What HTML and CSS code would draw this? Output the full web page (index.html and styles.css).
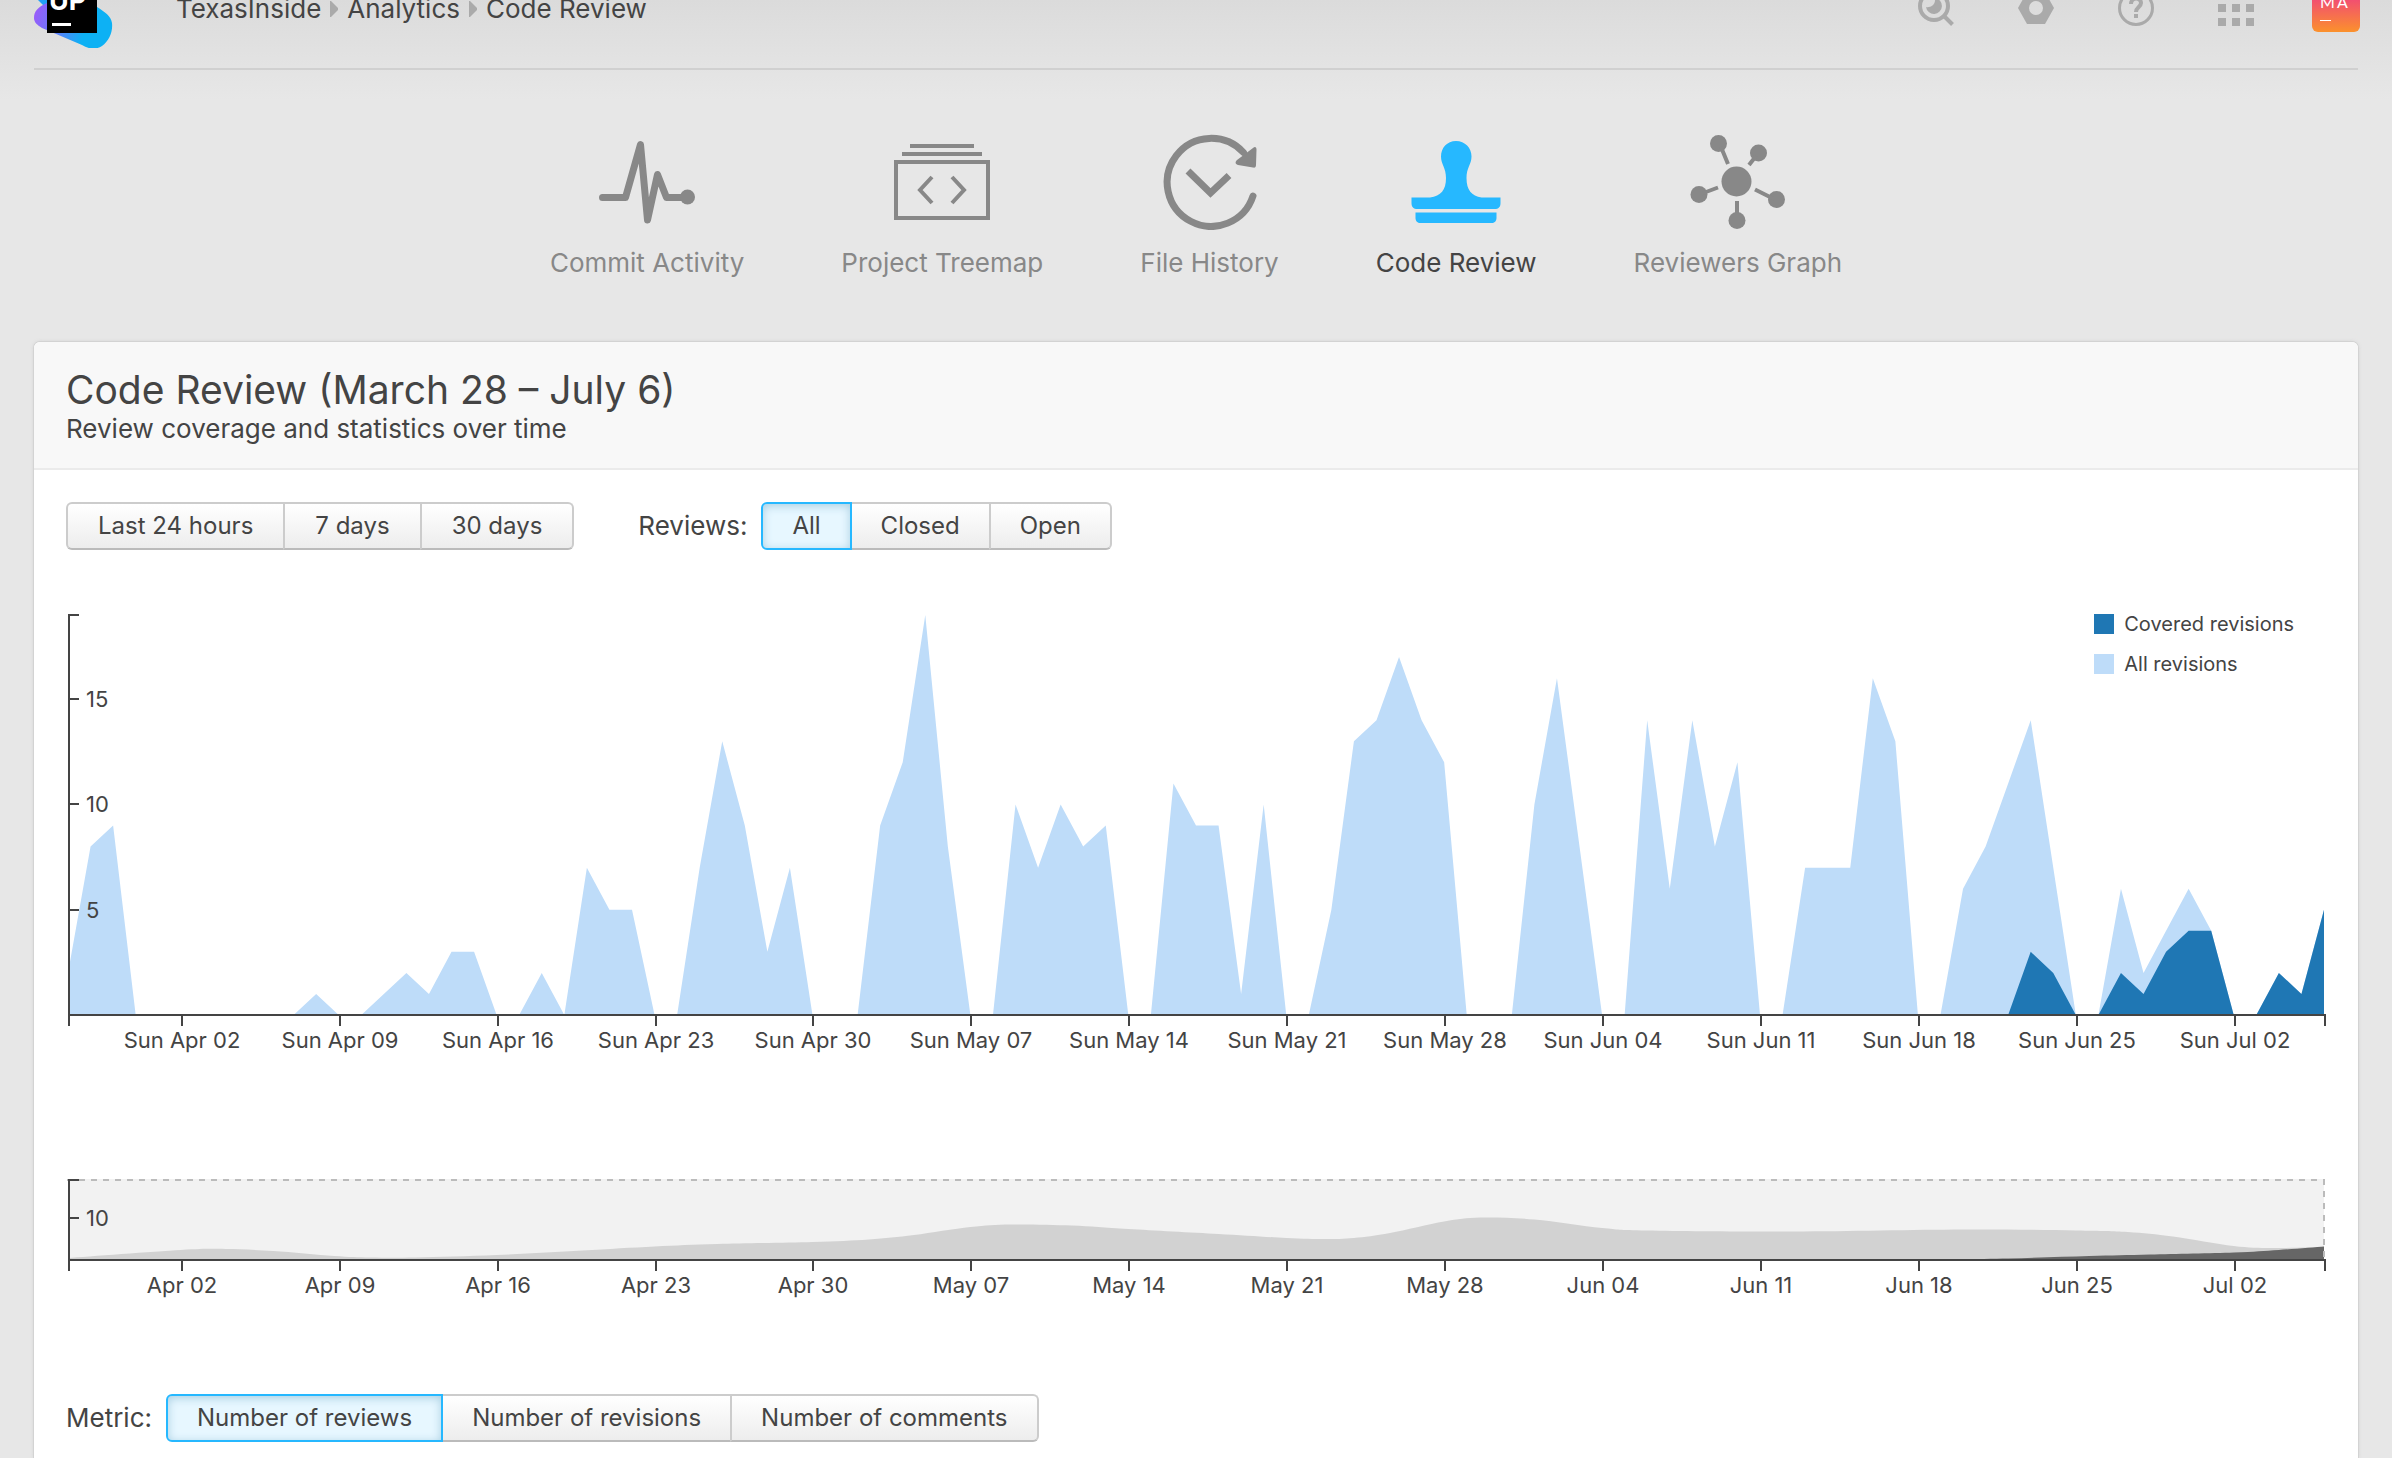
FILE: index.html
```html
<!DOCTYPE html>
<html lang="en">
<head>
<meta charset="utf-8">
<meta name="viewport" content="width=device-width, initial-scale=1">
<title>Code Review – TexasInside</title>
<link rel="stylesheet" href="styles.css">
</head>
<body>
<header class="topbar">
  <a class="logo" href="#" aria-label="Upsource">
    <svg width="80" height="80" viewBox="0 0 80 80">
      <defs>
        <linearGradient id="logo-a" gradientUnits="userSpaceOnUse" x1="0" y1="46" x2="60" y2="66">
          <stop offset="0" stop-color="#9a5cfa"/><stop offset=".45" stop-color="#5a80fb"/><stop offset=".85" stop-color="#0db1f4"/><stop offset="1" stop-color="#0db1f4"/>
        </linearGradient>
      </defs>
      <path fill="#22a0f5" d="M4 32L20 48L24 18L8 12Z"/>
      <path fill="url(#logo-a)" d="M13 35C4 39 0 43 0 50C0 54 3 57 8 60L48 77C54 81 62 82 68 78C75 73 79 64 78 55C77 48 71 44 63 39L40 20Z"/>
      <path fill="#000" d="M13 15h50v50H13z"/>
      <path fill="#fff" d="M18 55h19v3H18z"/>
      <text class="logo-text" x="15" y="42">UP</text>
    </svg>
  </a>
  <nav class="crumbs" aria-label="Breadcrumb">
    <a href="#">TexasInside</a>
    <svg width="8" height="16" viewBox="0 0 8 16"><path fill="#aaa" d="M0 0h1l7 7v2l-7 7H0z"/></svg>
    <a href="#">Analytics</a>
    <svg width="8" height="16" viewBox="0 0 8 16"><path fill="#aaa" d="M0 0h1l7 7v2l-7 7H0z"/></svg>
    <a href="#">Code Review</a>
  </nav>
  <div class="tools">
    <button class="tool" aria-label="Search">
      <svg width="36" height="36" viewBox="0 0 36 36"><circle cx="16" cy="16" r="14" fill="none" stroke="#aaa" stroke-width="4"/><path fill="#aaa" d="M17 8a8 8 0 1 1-9 9c4 1 10-2 9-9z"/><path stroke="#aaa" stroke-width="4" d="M26 26l8.500 8.500"/></svg>
    </button>
    <button class="tool" aria-label="Settings">
      <svg width="36" height="36" viewBox="0 0 36 36"><path fill="#aaa" fill-rule="evenodd" d="M9 2h18l9 16-9 16H9L0 18zM18 11a7 7 0 1 0 0 14a7 7 0 0 0 0-14z"/></svg>
    </button>
    <button class="tool" aria-label="Help">
      <svg width="36" height="36" viewBox="0 0 36 36"><circle cx="18" cy="18" r="16.500" fill="none" stroke="#aaa" stroke-width="3"/><path fill="none" stroke="#aaa" stroke-width="4" d="M13 14c0-7 10-7 10-1c0 4-5 4-5 9"/><path fill="#aaa" d="M16 24h4v4h-4z"/></svg>
    </button>
    <button class="tool" aria-label="Services">
      <svg width="36" height="36" viewBox="0 0 36 36"><path fill="#aaa" d="M0 0h8v8H0zM14 0h8v8h-8zM28 0h8v8h-8zM0 14h8v8H0zM14 14h8v8h-8zM28 14h8v8h-8zM0 28h8v8H0zM14 28h8v8h-8zM28 28h8v8h-8z"/></svg>
    </button>
    <button class="avatar" aria-label="Profile">
      <svg width="48" height="48" viewBox="0 0 48 48">
        <defs><linearGradient id="av" x1="0" y1="0" x2="0" y2="1"><stop offset="0" stop-color="#e8138c"/><stop offset=".33" stop-color="#f24f70"/><stop offset="1" stop-color="#fb912c"/></linearGradient></defs>
        <rect width="48" height="48" rx="6" fill="url(#av)"/>
        <text class="avatar-text" x="8" y="24">M</text><text class="avatar-text" x="25" y="24">A</text>
        <path fill="#fff" d="M8 36h11v1H8z"/>
      </svg>
    </button>
  </div>
</header>

<nav class="sections" aria-label="Analytics">
  <a class="section" href="#">
    <svg width="96" height="96" viewBox="0 0 96 96"><path fill="none" stroke="#888" stroke-width="7" stroke-linecap="round" stroke-linejoin="round" d="M3.500 63.500H26.500L41.500 10.500L48.500 86L58.500 40.500L67.500 63.500H88"/><circle cx="88.500" cy="63" r="7.500" fill="#888"/></svg>
    Commit Activity
  </a>
  <a class="section" href="#">
    <svg width="96" height="96" viewBox="0 0 96 96"><path fill="#888" d="M16 10h64v4H16zM8 18h80v4H8z"/><path fill="none" stroke="#888" stroke-width="4" d="M2 28h92v56H2zM38 43L26 56l12 13M58 43l12 13L58 69"/></svg>
    Project Treemap
  </a>
  <a class="section" href="#">
    <svg width="96" height="96" viewBox="0 0 96 96"><path fill="none" stroke="#888" stroke-width="7" stroke-linecap="round" d="M91 62A44 44 0 1 1 81.500 18.500"/><path fill="#888" d="M91 14c2-2 3.500-1 3.500 1.500L94 31c0 2-1 3-3 2.500L76 31c-3-1-3-3-1-5z"/><path fill="none" stroke="#888" stroke-width="7" d="M26 37l22.500 22L67 41.500"/></svg>
    File History
  </a>
  <a class="section section-active" href="#">
    <svg width="96" height="96" viewBox="0 0 96 96"><path fill="#26b8ff" d="M48 7c9 0 15.500 7 15.500 15.500c0 8-5 11-5 21.500c0 12 5 18 15 19.500h19V69c0 4-2 6-6 6H9.500c-4 0-6-2-6-6v-5.500H22C33 62 38 56 38 44c0-10.500-5-13.500-5-21.500C33 14 39 7 48 7zM7.500 78.500h81V84c0 3-2 5-5 5h-71c-3 0-5-2-5-5z"/></svg>
    Code Review
  </a>
  <a class="section" href="#">
    <svg width="96" height="96" viewBox="0 0 96 96"><g fill="#888"><circle cx="46.500" cy="47.500" r="15"/><circle cx="28.500" cy="9.500" r="8.500"/><circle cx="68.500" cy="19" r="8.500"/><circle cx="9" cy="60.500" r="8.500"/><circle cx="86.500" cy="65.500" r="8.500"/><circle cx="47" cy="86.500" r="8.500"/></g><path stroke="#888" stroke-width="4" d="M31 13l7 17M66 22l-7 9M12 59.500l16-6M84 65L65 55.500M47 84V67"/></svg>
    Reviewers Graph
  </a>
</nav>

<main class="panel">
  <div class="panel-head">
    <h1>Code Review (March 28 – July 6)</h1>
    <p>Review coverage and statistics over time</p>
  </div>
  <div class="panel-body">
    <div class="filters">
      <div class="group" role="group" aria-label="Period">
        <button class="btn">Last 24 hours</button><button class="btn">7 days</button><button class="btn">30 days</button>
      </div>
      <div class="field">
        <span id="reviews-label">Reviews:</span>
        <div class="group" role="group" aria-labelledby="reviews-label">
          <button class="btn btn-on" aria-pressed="true">All</button><button class="btn">Closed</button><button class="btn">Open</button>
        </div>
      </div>
    </div>
    <div class="chart">
      <svg id="coverage" role="img" aria-label="Covered and all revisions per day"></svg>
      <ul class="legend">
        <li><i class="swatch swatch-covered"></i>Covered revisions</li>
        <li><i class="swatch swatch-all"></i>All revisions</li>
      </ul>
    </div>
    <div class="overview">
      <svg id="overview" role="img" aria-label="Overview of the selected period"></svg>
    </div>
    <div class="field">
      <span id="metric-label">Metric:</span>
      <div class="group" role="group" aria-labelledby="metric-label">
        <button class="btn btn-on" aria-pressed="true">Number of reviews</button><button class="btn">Number of revisions</button><button class="btn">Number of comments</button>
      </div>
    </div>
  </div>
</main>
<script src="chart.js"></script>
</body>
</html>
```
FILE: styles.css
```css
* { box-sizing: border-box; }

body {
  margin: 0;
  padding: 0 34px;
  min-height: 100vh;
  display: flex;
  flex-direction: column;
  background: linear-gradient(#dbdbdb, #e7e7e7 100px) #e7e7e7;
  color: #444;
  font: 26px/32px Inter, "Liberation Sans", sans-serif;
}

a { color: inherit; text-decoration: none; }
button { font: inherit; color: inherit; }
svg { display: block; }

/* Top bar: scrolled partly out of view */
.topbar {
  display: flex;
  align-items: center;
  height: 102px;
  margin-top: -32px;
  padding-bottom: 20px;
  border-bottom: 2px solid #d0d0d0;
}
.logo { width: 80px; margin-right: 62px; }
.logo-text { font: 700 27px Inter, sans-serif; fill: #fff; }
.crumbs { display: flex; align-items: center; gap: 9px; padding-top: 2px; }
.tools { display: flex; align-items: center; gap: 64px; margin: 0 -2px 0 auto; }
.tool, .avatar { display: block; padding: 0; border: 0; background: none; }
.avatar { margin-left: -6px; }
.avatar-text { font: 16px Lato, sans-serif; fill: #fff; }

/* Section icons */
.sections {
  display: flex;
  justify-content: center;
  gap: 97px;
  padding: 64px 0 63px;
  color: #888;
}
.section { display: flex; flex-direction: column; align-items: center; gap: 17px; }
.section-active { color: #444; }

/* Panel */
.panel {
  flex: 1;
  background: #fff;
  border-radius: 6px 6px 0 0;
  box-shadow: 0 0 0 1px #d3d3d3, 0 0 4px #ccc;
}
.panel-head {
  padding: 24px 32px;
  height: 128px;
  background: #f8f8f8;
  border-bottom: 2px solid #ebebeb;
  border-radius: 6px 6px 0 0;
}
h1 { margin: 0; font-size: 39px; line-height: 48px; font-weight: 400; }
p { margin: 0; line-height: 30px; }
.panel-body { padding: 32px 32px 16px; }

.filters { display: flex; align-items: center; gap: 64px; }
.field { display: flex; align-items: center; gap: 14px; }
.group { display: flex; }
.btn {
  height: 48px;
  padding: 0 30px;
  margin-left: -2px;
  border: 2px solid #ccc;
  border-bottom-color: #bbb;
  background: linear-gradient(#fff, #ededed);
  font-size: 24px;
  white-space: nowrap;
}
.btn:first-child { margin-left: 0; border-radius: 6px 0 0 6px; }
.btn:last-child { border-radius: 0 6px 6px 0; }
.field .btn { padding: 0 29px; }
.btn-on {
  position: relative;
  border-color: #26b8ff;
  background: #e7f7ff;
  box-shadow: inset 0 2px 10px #a9cfe2;
}

/* Charts */
.chart { position: relative; margin-top: 64px; }
.chart svg { width: 100%; height: 446px; }
.overview { margin: 119px 0 85px; }
.overview svg { width: 100%; height: 130px; }
.chart text, .overview text { font-size: 22px; fill: #444; }
.axis { fill: none; stroke: #444; stroke-width: 2; }
.area-all { fill: #bedcf9; }
.area-covered { fill: #1f77b4; }
.area-past { fill: #d2d2d2; }
.area-dark { fill: #666; }
.brush { fill: #f2f2f2; }
.brush-line { fill: none; stroke: #bbb; stroke-width: 2; stroke-dasharray: 6 6; }
.legend {
  position: absolute;
  top: 0;
  right: 32px;
  margin: 0;
  padding: 0;
  list-style: none;
  font-size: 20px;
}
.legend li { display: flex; align-items: center; gap: 10px; height: 40px; padding-bottom: 20px; line-height: 20px; }
.swatch { width: 20px; height: 20px; }
.swatch-covered { background: #1f77b4; }
.swatch-all { background: #bedcf9; }
```
FILE: chart.js
```js
// Revisions per day, starting on March 28
const all = [
  2, 8, 9, 0, 0, 0, 0, 0, 0, 0, 0, 1, 0, 0, 1, 2, 1, 3, 3, 0,
  0, 2, 0, 7, 5, 5, 0, 0, 7, 13, 9, 3, 7, 0, 0, 0, 9, 12, 19, 8,
  0, 0, 10, 7, 10, 8, 9, 0, 0, 11, 9, 9, 1, 10, 0, 0, 5, 13, 14, 17,
  14, 12, 0, 0, 0, 10, 16, 8, 0, 0, 14, 6, 14, 8, 12, 0, 0, 7, 7, 7,
  16, 13, 0, 0, 6, 8, 11, 14, 7, 0, 0, 6, 2, 4, 6, 4, 0, 0, 2, 1, 5
];
const covered = all.map(() => 0);
[0, 3, 2, 0, 0, 2, 1, 3, 4, 4, 0, 0, 2, 1, 5].forEach((v, i) => { covered[86 + i] = v; });

// Smoothed averages: [day, height in pixels]
const trend = [
  [0, 2], [5, 10], [7, 11], [9.1, 9], [11.8, 4], [13.4, 2.5], [15.4, 2.5], [19, 5], [22.8, 9.5], [26, 13.5],
  [28.8, 16], [33, 18], [35.5, 20.5], [37.5, 25], [40, 33], [41.8, 35.5], [44.5, 34.5], [47, 31], [51, 26],
  [54, 22], [55.7, 21], [57, 22], [58.6, 27], [61, 38.5], [62.6, 42.5], [65, 40.5], [68, 32], [70, 29.5],
  [76.5, 28.5], [84, 30.5], [89, 29.5], [91.3, 28], [93.3, 23.5], [96, 14], [97.7, 12], [100, 13]
];
const trendCovered = [[82, 0], [86, 1.5], [89.6, 4], [92.3, 5.5], [96, 7.5], [98, 10], [100, 13.5]];

const sundays = ['Apr 02', 'Apr 09', 'Apr 16', 'Apr 23', 'Apr 30', 'May 07', 'May 14',
  'May 21', 'May 28', 'Jun 04', 'Jun 11', 'Jun 18', 'Jun 25', 'Jul 02'];
const LEFT = 2;
const RIGHT = 2;

function areaPath(values, x, y) {
  return `M${x(0)} ${y(0)}` + values.map((v, i) => `L${x(i)} ${y(v)}`).join('') + `V${y(0)}Z`;
}

function smoothPath(points, x, base) {
  const p = points.map(([d, h]) => [x(d), base - h]);
  let d = `M${p[0][0]} ${base}V${p[0][1]}`;
  for (let i = 0; i < p.length - 1; i++) {
    const a = p[i - 1] || p[i], b = p[i], c = p[i + 1], e = p[i + 2] || c;
    d += `C${b[0] + (c[0] - a[0]) / 6} ${b[1] + (c[1] - a[1]) / 6} ` +
      `${c[0] - (e[0] - b[0]) / 6} ${c[1] - (e[1] - b[1]) / 6} ${c[0]} ${c[1]}`;
  }
  return d + `V${base}Z`;
}

function axes(x, y, bottom, prefix, yTicks) {
  const right = x(100) + 1;
  let path = `M13 1H3V${bottom + 11}M3 ${bottom}H${right}V${bottom + 11}`;
  let labels = '';
  yTicks.forEach(v => {
    path += `M3 ${Math.round(y(v))}h10`;
    labels += `<text x="20" y="${Math.round(y(v)) + 8}">${v}</text>`;
  });
  sundays.forEach((s, i) => {
    const tx = Math.round(x(5 + 7 * i)) + 1;
    path += `M${tx} ${bottom}v11`;
    labels += `<text x="${tx}" y="${bottom + 33}" text-anchor="middle">${prefix}${s}</text>`;
  });
  return `<path class="axis" d="${path}"/>${labels}`;
}

function draw() {
  const main = document.getElementById('coverage');
  const small = document.getElementById('overview');
  const width = main.parentNode.clientWidth;
  const x = d => LEFT + d * (width - LEFT - RIGHT) / 100;

  const y = v => 401 - v * 400 / 19;
  main.innerHTML =
    `<path class="area-all" d="${areaPath(all, x, y)}"/>` +
    `<path class="area-covered" d="${areaPath(covered, x, y)}"/>` +
    axes(x, y, 401, 'Sun ', [5, 10, 15]);

  const ys = v => 81 - v * 80 / 19;
  small.innerHTML =
    `<rect class="brush" x="2" y="0" width="${x(100) - 2}" height="80"/>` +
    `<path class="area-past" d="${smoothPath(trend, x, 81)}"/>` +
    `<path class="area-dark" d="${smoothPath(trendCovered, x, 81)}"/>` +
    `<path class="brush-line" d="M2 0V1H${x(100)}V80"/>` +
    axes(x, ys, 81, '', [10]);
}

draw();
window.addEventListener('resize', draw);
```
